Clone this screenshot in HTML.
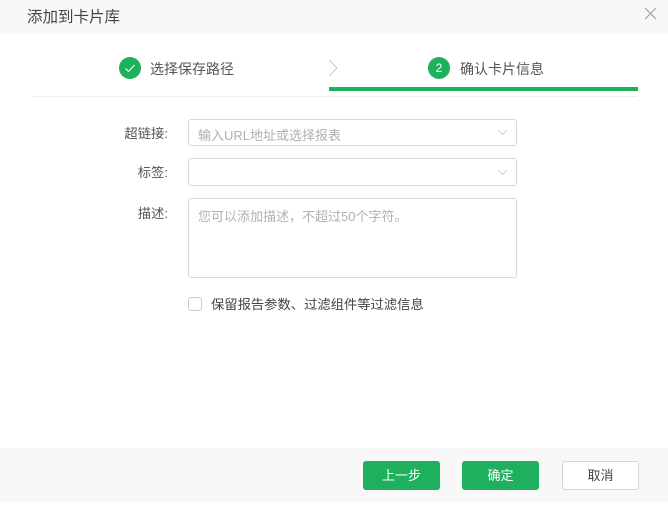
<!DOCTYPE html>
<html><head><meta charset="utf-8"><style>
*{margin:0;padding:0;box-sizing:border-box}
body{width:668px;height:507px;background:#fff;font-family:"Liberation Sans","Noto Sans CJK SC",sans-serif;position:relative;overflow:hidden;color:#333}
.a{position:absolute}
.hdr{left:0;top:0;width:668px;height:32px;background:#f8f8f8;box-shadow:0 1px 2px rgba(0,0,0,.05)}
.inp{position:absolute;left:188px;width:329px;border:1px solid #d9d9d9;border-radius:3px;background:#fff}
.ph{color:#b0b0b0;font-size:13px;position:absolute;left:9px}
.lbl{position:absolute;font-size:13.3px;color:#555;right:500px;text-align:right}
.btn{position:absolute;top:461px;width:77px;height:29px;border-radius:3px;font-size:13px;text-align:center;line-height:29px}
</style></head><body>
<div class="a hdr"></div>
<div class="a" style="left:27px;top:5px;font-size:15.5px;color:#444">添加到卡片库</div>
<svg class="a" style="left:644px;top:7px" width="13" height="13"><path d="M1 1L12 12M12 1L1 12" stroke="#999" stroke-width="1"/></svg>
<div class="a" style="left:119px;top:57px;width:22px;height:22px;border-radius:50%;background:#1fb05d"></div>
<svg class="a" style="left:119px;top:57px" width="22" height="22"><path d="M6.5 11.5l3 3 6-6.5" fill="none" stroke="#fff" stroke-width="1"/></svg>
<div class="a" style="left:150px;top:59px;font-size:14px;color:#555">选择保存路径</div>
<svg class="a" style="left:327px;top:59px" width="12" height="18"><path d="M2 1l8 8-8 8" fill="none" stroke="#bbb" stroke-width="0.8"/></svg>
<div class="a" style="left:428px;top:57px;width:22px;height:22px;border-radius:50%;background:#1fb05d;color:#fff;font-size:12px;text-align:center;line-height:22px">2</div>
<div class="a" style="left:460px;top:59px;font-size:14px;color:#555">确认卡片信息</div>
<div class="a" style="left:33px;top:96px;width:605px;height:1px;background:#eceef2"></div>
<div class="a" style="left:329px;top:87px;width:309px;height:4px;background:#1fb05d"></div>
<div class="lbl" style="top:123px">超链接:</div>
<div class="inp" style="top:119px;height:27px"><span class="ph" style="top:5px">输入URL地址或选择报表</span>
<svg class="a" style="right:8px;top:9px" width="11" height="7"><path d="M1 1l4.5 4.5L10 1" fill="none" stroke="#c4c4c4" stroke-width="0.8"/></svg></div>
<div class="lbl" style="top:162px">标签:</div>
<div class="inp" style="top:158px;height:28px">
<svg class="a" style="right:8px;top:10px" width="11" height="7"><path d="M1 1l4.5 4.5L10 1" fill="none" stroke="#c4c4c4" stroke-width="0.8"/></svg></div>
<div class="lbl" style="top:203px">描述:</div>
<div class="inp" style="top:198px;height:80px"><span class="ph" style="top:7px">您可以添加描述，不超过50个字符。</span></div>
<div class="a" style="left:188px;top:297px;width:14px;height:14px;border:1px solid #ccc;border-radius:3px"></div>
<div class="a" style="left:211px;top:294px;font-size:13.3px;color:#444">保留报告参数、过滤组件等过滤信息</div>
<div class="a" style="left:0;top:448px;width:668px;height:54px;background:#f8f8f8"></div>
<div class="btn" style="left:363px;background:#1fb05d;color:#fff">上一步</div>
<div class="btn" style="left:462px;background:#1fb05d;color:#fff">确定</div>
<div class="btn" style="left:562px;background:#fff;border:1px solid #d6d6d6;color:#444;line-height:27px">取消</div>
</body></html>
